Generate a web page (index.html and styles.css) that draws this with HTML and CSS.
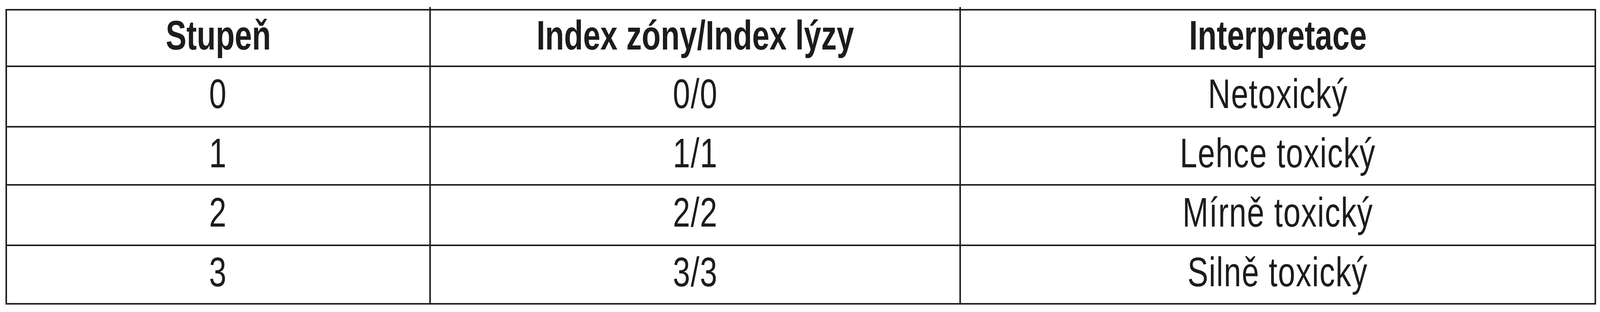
FILE: index.html
```html
<!DOCTYPE html>
<html lang="cs">
<head>
<meta charset="utf-8">
<title>Stupeň toxicity</title>
<link rel="stylesheet" href="styles.css">
</head>
<body>
<div class="grid" role="table">
  <div class="cell head" role="columnheader"><span class="txt">Stupeň</span></div>
  <div class="cell head" role="columnheader"><span class="txt">Index zóny/Index lýzy</span></div>
  <div class="cell head last" role="columnheader"><span class="txt">Interpretace</span></div>

  <div class="cell" role="cell"><span class="txt">0</span></div>
  <div class="cell" role="cell"><span class="txt">0/0</span></div>
  <div class="cell last" role="cell"><span class="txt">Netoxický</span></div>

  <div class="cell" role="cell"><span class="txt">1</span></div>
  <div class="cell" role="cell"><span class="txt">1/1</span></div>
  <div class="cell last" role="cell"><span class="txt">Lehce toxický</span></div>

  <div class="cell" role="cell"><span class="txt">2</span></div>
  <div class="cell" role="cell"><span class="txt">2/2</span></div>
  <div class="cell last" role="cell"><span class="txt">Mírně toxický</span></div>

  <div class="cell foot" role="cell"><span class="txt">3</span></div>
  <div class="cell foot" role="cell"><span class="txt">3/3</span></div>
  <div class="cell foot last" role="cell"><span class="txt">Silně toxický</span></div>
</div>
</body>
</html>
```

FILE: styles.css
```css
html, body {
  margin: 0;
  padding: 0;
  background: #ffffff;
}

body {
  font-family: "Liberation Sans", Arial, sans-serif;
  color: #1d1c1a;
}

/* geometry is expressed in units of the 5408px-wide design, scaled to the viewport width */
.grid {
  display: grid;
  grid-template-columns:
    calc(100vw * 1432 / 5408)
    calc(100vw * 1792 / 5408)
    calc(100vw * 2147 / 5408);
  grid-template-rows: 145px 155px 149px 155px 150px;
  width: max-content;
  margin: 23px 0 0 calc(100vw * 19 / 5408);
  border-top: 4px solid #231f20;
  border-left: 4px solid #231f20;
}

.cell {
  position: relative;
  box-sizing: border-box;
  display: flex;
  align-items: center;
  justify-content: center;
  border-right: 4px solid #231f20;
  border-bottom: 4px solid #231f20;
  padding-bottom: 14px;
  font-size: 105px;
  line-height: 105px;
  letter-spacing: 2px;
  white-space: nowrap;
}

.txt {
  display: inline-block;
  transform: scaleX(0.757);
}

.head {
  font-weight: bold;
  letter-spacing: 0;
}

/* small overhang of the inner column rules above and below the table */
.head:not(.last)::after,
.foot:not(.last)::after {
  content: "";
  position: absolute;
  right: -4px;
  width: 4px;
  height: 5px;
  background: #231f20;
}

.head:not(.last)::after {
  top: -9px;
}

.foot:not(.last)::after {
  bottom: -9px;
}
```
